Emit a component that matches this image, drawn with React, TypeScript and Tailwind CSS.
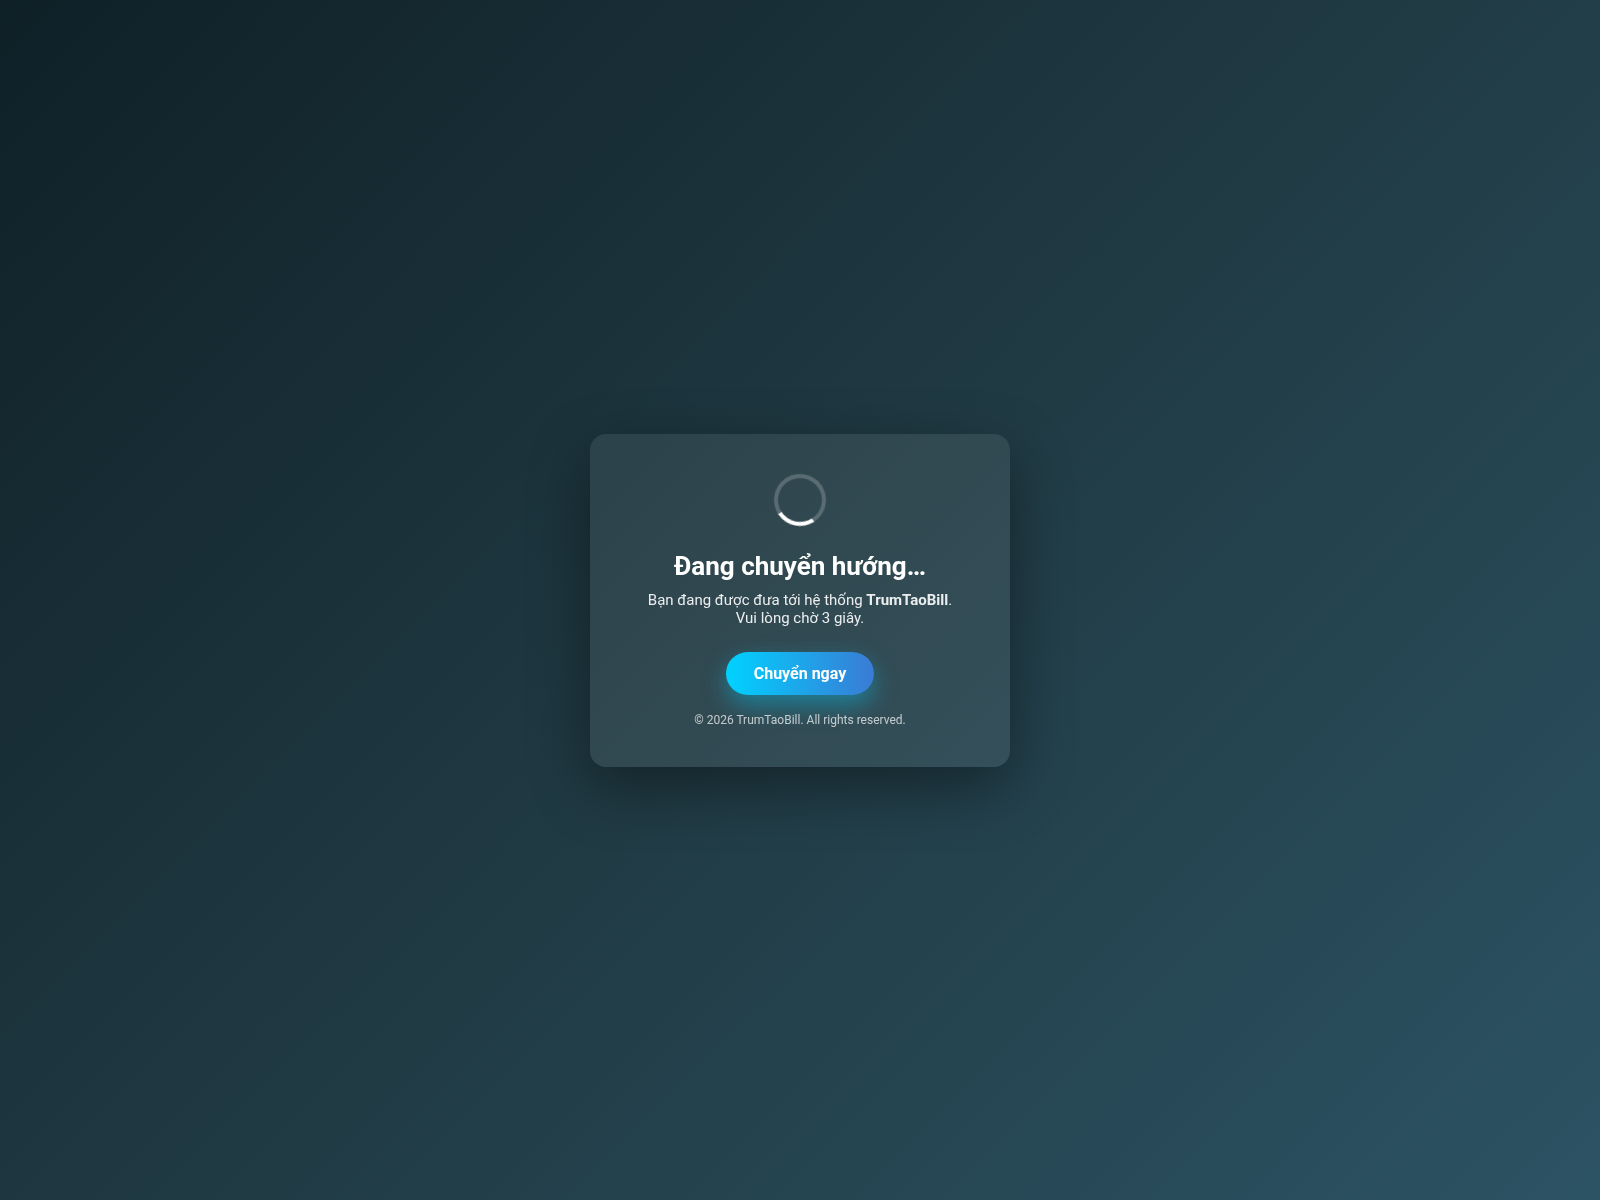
import { useEffect, useState } from 'react';

const TARGET_URL = '#';

const Spinner = () => (
  <div className="mx-auto mb-[25px] size-[52px] rotate-[192deg] rounded-full border-4 border-white/20 border-t-white will-change-transform" />
);

export default function App() {
  const [year] = useState(2026);

  useEffect(() => {
    document.title = 'Đang chuyển hướng…';
  }, []);

  return (
    <div className="flex min-h-screen items-center justify-center bg-[linear-gradient(135deg,#0f2027,#203a43,#2c5364)] font-['Roboto',sans-serif] text-white">
      <main className="w-full max-w-[420px] rounded-2xl bg-white/8 px-8 py-10 text-center shadow-[0_20px_60px_rgba(0,0,0,0.4)] will-change-transform">
        <Spinner />

        <h1 className="mb-[10px] text-[26px] leading-[30px] font-bold">Đang chuyển hướng…</h1>
        <p className="mb-[25px] text-[15px] leading-[18px] opacity-90">
          Bạn đang được đưa tới hệ thống <b>TrumTaoBill</b>.
          <br />
          Vui lòng chờ 3 giây.
        </p>

        <a
          href={TARGET_URL}
          className="inline-block rounded-full bg-[linear-gradient(90deg,#00d2ff,#3a7bd5)] px-7 py-3 align-top text-base leading-[19px] font-bold shadow-[0_10px_25px_rgba(0,210,255,0.4)]"
        >
          Chuyển ngay
        </a>

        <footer className="mt-[18px] text-xs leading-[14px] opacity-70">
          © {year} TrumTaoBill. All rights reserved.
        </footer>
      </main>
    </div>
  );
}
